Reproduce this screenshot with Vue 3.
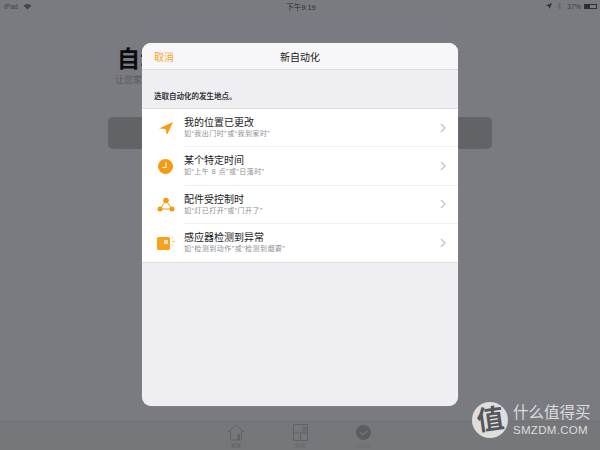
<template>
  <div class="screen">
    <div class="status-bar">
      <div class="status-left">
        <span>iPad</span>
        <svg width="9" height="7" viewBox="0 0 12 9">
          <path d="M6 8.500 L0.500 3 Q6 -1 11.500 3 Z" fill="#44454a" />
        </svg>
      </div>
      <div class="status-time">下午9:19</div>
      <div class="status-right">
        <svg width="6" height="6" viewBox="0 0 7 7"><path d="M7 0 L0 3 L3.200 3.800 L4 7 Z" fill="#2e2f32" /></svg>
        <svg width="5" height="8" viewBox="0 0 5 9" class="bt"><path d="M0.500 2.500 L4 6 L2.500 8 V1 L4 3 L0.500 6.500" fill="none" stroke="#5c5d61" stroke-width="0.7" /></svg>
        <span>37%</span>
        <div class="battery"><div class="battery-level"></div></div>
      </div>
    </div>

    <div class="page">
      <h1>自动化</h1>
      <p class="page-sub">让您家中的配件自动响应</p>
      <div class="page-btn"></div>
    </div>

    <div class="tab-bar">
      <div class="tab">
        <svg width="18" height="17" viewBox="0 0 18 17" fill="none" stroke="#616266" stroke-width="1">
          <path d="M1 8 L9 1 L17 8" />
          <path d="M3.500 6.500 V16 H14.500 V6.500" />
          <rect x="10.500" y="10" width="2.500" height="6" fill="#616266" stroke="none" />
        </svg>
        <span>家庭</span>
      </div>
      <div class="tab">
        <svg width="15" height="17" viewBox="0 0 15 17" fill="none" stroke="#616266" stroke-width="1">
          <rect x="0.500" y="0.500" width="14" height="16" />
          <path d="M1 9 H14 M7.500 9 V16" />
          <rect x="9" y="2" width="5" height="6" fill="#6c6d71" stroke="none" />
        </svg>
        <span>房间</span>
      </div>
      <div class="tab">
        <svg width="17" height="17" viewBox="0 0 17 17">
          <circle cx="8.500" cy="8.500" r="7.500" fill="#5c5d60" />
          <path d="M4.500 8 L8 11 L12.500 6.500" fill="none" stroke="#727377" stroke-width="1.200" />
        </svg>
        <span class="tab-active">自动化</span>
      </div>
    </div>

    <div class="watermark">
      <div class="wm-logo"><span>值</span></div>
      <div class="wm-text">
        <div class="wm-cn">什么值得买</div>
        <div class="wm-en">SMZDM.COM</div>
      </div>
    </div>

    <div class="modal">
      <div class="modal-nav">
        <span class="cancel">取消</span>
        <span class="modal-title">新自动化</span>
      </div>
      <div class="section-label">选取自动化的发生地点。</div>
      <div class="list">
        <div class="row" v-for="item in rows" :key="item.title">
          <div class="row-icon">
            <svg v-if="item.icon === 'location'" width="14" height="13" viewBox="0 0 14 13">
              <path d="M14 0 L0 6.500 L6.500 7 L8 13 Z" fill="#f79a0f" />
            </svg>
            <svg v-if="item.icon === 'clock'" width="15" height="15" viewBox="0 0 16 16">
              <circle cx="8" cy="8" r="8" fill="#f79a0f" />
              <path d="M8.500 3.500 V9 H4.500" fill="none" stroke="#fff" stroke-width="1.200" />
            </svg>
            <svg v-if="item.icon === 'accessory'" width="18" height="16" viewBox="0 0 18 16">
              <path d="M9 3.500 L3 12 H15 Z" fill="none" stroke="#f79a0f" stroke-width="1" />
              <circle cx="9" cy="3.500" r="2.800" fill="#f79a0f" />
              <circle cx="3" cy="12" r="2.500" fill="#f79a0f" />
              <circle cx="15" cy="12" r="2.500" fill="#f79a0f" />
            </svg>
            <svg v-if="item.icon === 'sensor'" width="18" height="15" viewBox="0 0 18 15">
              <rect x="0" y="2" width="13" height="13" rx="1.500" fill="#f9a01e" />
              <rect x="7" y="5" width="4" height="4" fill="#fde3b8" />
              <path d="M14.500 3.500 L16.500 2 M15 6.500 H18 M14.500 9.500 L16.500 11" stroke="#fbc67d" stroke-width="1" />
            </svg>
          </div>
          <div class="row-body">
            <div class="row-text">
              <div class="row-title">{{ item.title }}</div>
              <div class="row-sub">{{ item.sub }}</div>
            </div>
            <svg class="chevron" width="6" height="10" viewBox="0 0 6 10">
              <path d="M1 1 L5 5 L1 9" fill="none" stroke="#c7c7cc" stroke-width="1.500" />
            </svg>
          </div>
        </div>
      </div>
    </div>
  </div>
</template>

<script setup>
const rows = [
  { icon: 'location', title: '我的位置已更改', sub: '如“我出门时”或“我到家时”' },
  { icon: 'clock', title: '某个特定时间', sub: '如“上午 8 点”或“日落时”' },
  { icon: 'accessory', title: '配件受控制时', sub: '如“灯已打开”或“门开了”' },
  { icon: 'sensor', title: '感应器检测到异常', sub: '如“检测到动作”或“检测到烟雾”' }
]
</script>

<style>
html, body { margin: 0; background: #7a7b80; }
</style>

<style scoped>
.screen {
  position: relative; width: 600px; height: 450px; overflow: hidden;
  background: #7a7b80; display: flex; flex-direction: column;
  font-family: "Liberation Sans", "Noto Sans CJK SC", sans-serif; color: #000;
}
.status-bar {
  height: 12px; padding: 0 3px 0 4px; margin-bottom: 24px;
  display: flex; align-items: center; justify-content: space-between;
  position: relative; font-size: 7px; color: #404145;
}
.status-left, .status-right { display: flex; align-items: center; gap: 3px; }
.status-left { gap: 5px; }
.status-time { position: absolute; left: 2px; right: 0; text-align: center; font-size: 7.500px; color: #2e2f32; }
.bt { margin: 0 2px; }
.battery { width: 13px; height: 5px; border: 1px solid #2e2f32; box-sizing: border-box; }
.battery-level { width: 5px; height: 100%; background: #2e2f32; }
.page { padding: 0 108px; flex: 1; }
.page h1 { margin: 9px 0 0 9px; font-size: 23px; line-height: 28px; font-weight: 700; color: #0c0c0d; }
.page-sub { margin: 1px 0 0 7px; font-size: 9px; line-height: 12px; color: #58595c; white-space: nowrap; }
.page-btn { height: 32px; margin-top: 31px; background: #626366; border-radius: 5px; }
.tab-bar {
  height: 29px; background: #76777b; border-top: 1px solid #707175; box-sizing: border-box;
  display: flex; justify-content: center; gap: 40px;
}
.tab { width: 23px; display: flex; flex-direction: column; align-items: center; padding-top: 2px; font-size: 5px; color: #5c5d60; }
.tab:first-child { position: relative; left: -1px; }
.tab span { white-space: nowrap; }
.tab-active { color: #6c6d70; }
.watermark {
  position: absolute; left: 472px; top: 402px; display: flex; align-items: center; gap: 5px; color: #dcdcdc;
}
.wm-logo {
  width: 36px; height: 36px; border-radius: 50%; background: #dedede; color: #55565a;
  display: flex; align-items: center; justify-content: center;
  font-size: 27px; font-weight: 700; line-height: 1;
}
.wm-logo span { transform: rotate(-8deg); }
.wm-cn { font-size: 15.500px; line-height: 20px; white-space: nowrap; }
.wm-en { font-size: 11.500px; line-height: 15px; white-space: nowrap; letter-spacing: 0.300px; }
.modal {
  position: absolute; left: 142px; top: 43px; width: 316px; height: 363px;
  background: #efeff3; border-radius: 9px; overflow: hidden;
  box-shadow: 0 0 1px rgba(255,255,255,0.5);
}
.modal-nav {
  height: 26px; background: #f7f7f9; border-bottom: 1px solid #dcdce0;
  position: relative; display: flex; align-items: center; justify-content: center;
}
.cancel { position: absolute; left: 12px; font-size: 10px; color: #f5a623; }
.modal-title { font-size: 10px; color: #151515; }
.section-label {
  padding: 21px 12px 5px; font-size: 7.500px; line-height: 12px; font-weight: 700; color: #3a3a3c;
}
.list { background: #fff; border-top: 1px solid #dedee2; border-bottom: 1px solid #dedee2; }
.row { height: 38.250px; display: flex; align-items: stretch; }
.row-icon { width: 42px; flex-shrink: 0; display: flex; align-items: center; justify-content: center; padding-left: 5px; box-sizing: border-box; }
.row-body {
  flex: 1; display: flex; align-items: center; justify-content: space-between;
  padding-right: 12px; border-bottom: 1px solid #f0f0f2;
}
.row:last-child .row-body { border-bottom: none; }
.row-title { font-size: 10px; line-height: 13px; color: #222; }
.row-sub { font-size: 7px; line-height: 10px; color: #8e8e93; letter-spacing: 0.500px; }
</style>
